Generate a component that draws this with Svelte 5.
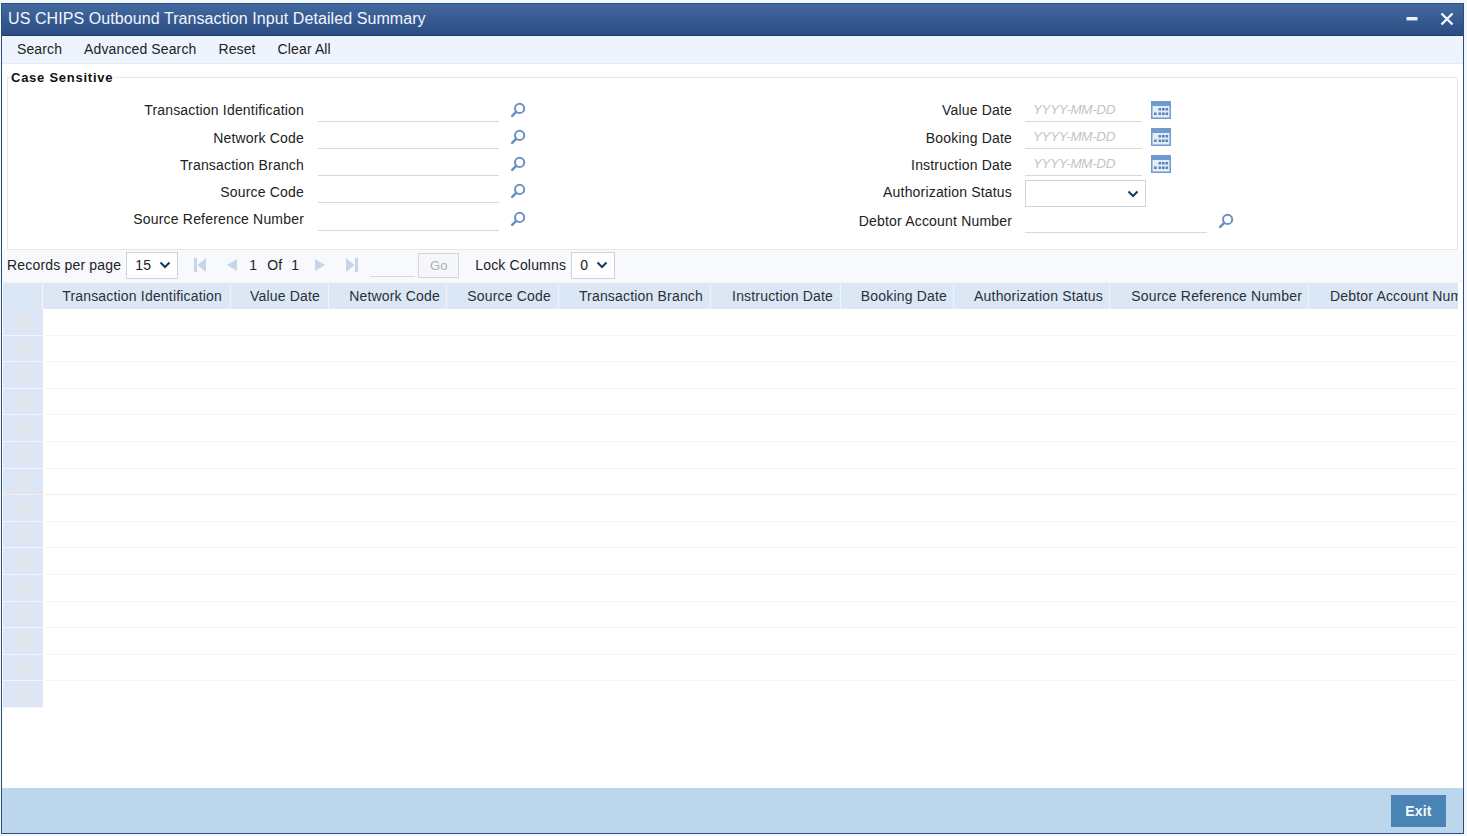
<script>
  const toolbar = ['Search', 'Advanced Search', 'Reset', 'Clear All'];
  const leftFields = ['Transaction Identification', 'Network Code', 'Transaction Branch', 'Source Code', 'Source Reference Number'];
  const dateFields = ['Value Date', 'Booking Date', 'Instruction Date'];
  const columns = [
    ['Transaction Identification', 187, 8], ['Value Date', 98, 8], ['Network Code', 118, 6], ['Source Code', 112, 7],
    ['Transaction Branch', 152, 7], ['Instruction Date', 130, 7], ['Booking Date', 113, 6], ['Authorization Status', 156, 6],
    ['Source Reference Number', 199, 6]
  ];
  const rows = Array.from({ length: 15 }, (_, i) => i);
</script>

{#snippet lens()}
  <svg class="lens" viewBox="0 0 16 16" width="16" height="16" aria-hidden="true">
    <circle cx="9.6" cy="6.4" r="4.6" fill="none" stroke="#6892c6" stroke-width="2" />
    <path d="M6.2 9.8 L2.2 13.8" stroke="#6892c6" stroke-width="2.6" stroke-linecap="round" />
  </svg>
{/snippet}

{#snippet calendar()}
  <svg class="cal" viewBox="0 0 20 18" width="20" height="18" aria-hidden="true">
    <rect width="20" height="18" fill="#6f9bcf" />
    <rect x="1.500" y="5" width="17" height="11.500" fill="#e3ecf7" />
    <path d="M7.500 7h2.600v2.600H7.500zM11 7h2.600v2.600H11zM14.500 7h2.600v2.600h-2.600zM3 11.500h2.600v2.600H3zM7.500 11.500h2.600v2.600H7.500zM11 11.500h2.600v2.600H11zM14.500 11.500h2.600v2.600h-2.600z" fill="#5584bc" />
  </svg>
{/snippet}

{#snippet chevron()}
  <svg class="chev" viewBox="0 0 12 8" width="12" height="8" aria-hidden="true">
    <path d="M1.500 1.500 L6 6 L10.500 1.500" fill="none" stroke="#123a63" stroke-width="2" />
  </svg>
{/snippet}

<div class="page">
  <div class="window">
    <header class="title">
      <span>US CHIPS Outbound Transaction Input Detailed Summary</span>
      <div class="winctl">
        <svg viewBox="0 0 12 12" width="12" height="12" aria-hidden="true"><rect x="0.500" y="4" width="11" height="3.400" fill="#eef3fa" /></svg>
        <svg viewBox="0 0 14 14" width="14" height="14" aria-hidden="true"><path d="M1.500 1.500 L12.500 12.500 M12.500 1.500 L1.500 12.500" stroke="#f4f7fc" stroke-width="2.400" /></svg>
      </div>
    </header>

    <nav class="toolbar">
      {#each toolbar as item}<span>{item}</span>{/each}
    </nav>

    <fieldset class="search">
      <legend>Case Sensitive</legend>
      <div class="form">
        <div class="col left">
          {#each leftFields as f}
            <div class="row">
              <span class="lbl">{f}</span>
              <span class="inp"></span>
              {@render lens()}
            </div>
          {/each}
        </div>
        <div class="col right">
          {#each dateFields as f}
            <div class="row dated">
              <span class="lbl">{f}</span>
              <span class="inp date">YYYY-MM-DD</span>
              {@render calendar()}
            </div>
          {/each}
          <div class="row status">
            <span class="lbl">Authorization Status</span>
            <span class="sel wide">{@render chevron()}</span>
          </div>
          <div class="row debtor">
            <span class="lbl">Debtor Account Number</span>
            <span class="inp long"></span>
            {@render lens()}
          </div>
        </div>
      </div>
    </fieldset>

    <div class="pager">
      <span class="t">Records per page</span>
      <span class="sel small rpp">15{@render chevron()}</span>
      <svg class="pg first" viewBox="0 0 12 14" width="12" height="14" aria-hidden="true"><path d="M0 0h3v14H0zM12 0v14L3.500 7z" fill="#c6d6ea" /></svg>
      <svg class="pg prev" viewBox="0 0 10 12" width="10" height="12" aria-hidden="true"><path d="M10 0v12L0 6z" fill="#c6d6ea" /></svg>
      <span class="t n1">1</span>
      <span class="t of">Of</span>
      <span class="t n2">1</span>
      <svg class="pg next" viewBox="0 0 10 12" width="10" height="12" aria-hidden="true"><path d="M0 0v12l10-6z" fill="#c6d6ea" /></svg>
      <svg class="pg last" viewBox="0 0 12 14" width="12" height="14" aria-hidden="true"><path d="M12 0H9v14h3zM0 0v14l8.500-7z" fill="#c6d6ea" /></svg>
      <span class="pageinp"></span>
      <span class="go">Go</span>
      <span class="t lock">Lock Columns</span>
      <span class="sel small zero">0{@render chevron()}</span>
    </div>

    <div class="grid">
      <div class="clip">
        <div class="head">
          <div class="corner"></div>
          {#each columns as [name, w, pad]}
            <div class="th" style:width="{w}px" style:padding-right="{pad}px">{name}</div>
          {/each}
          <div class="th lastcol">Debtor Account Number</div>
        </div>
        {#each rows as r}
          <div class="tr" class:strong={r === 6}>
            <div class="num"><i></i></div>
            <div class="td"></div>
          </div>
        {/each}
      </div>
    </div>

    <footer class="foot">
      <span class="exit">Exit</span>
    </footer>
  </div>
</div>

<style>
  :global(body) { margin: 0; background: #fff; }
  .page {
    height: 836px;
    box-sizing: border-box;
    padding: 3px 3px 2px 1px;
    background: #f4f8fd;
    font: 14px/16px "Liberation Sans", Arial, sans-serif;
    letter-spacing: 0.18px;
    color: #222;
    overflow: hidden;
  }
  .window {
    height: 100%;
    box-sizing: border-box;
    border: 1px solid #2b4f7c;
    background: #fff;
    display: flex;
    flex-direction: column;
    overflow: hidden;
  }
  .title {
    height: 32px;
    flex: none;
    box-sizing: border-box;
    display: flex;
    align-items: center;
    justify-content: space-between;
    padding: 0 9px 2px 6px;
    background: linear-gradient(#44699f, #2a4d83);
    color: #f2f6fb;
    font-size: 16px;
    letter-spacing: 0.08px;
    border-bottom: 1px solid #23406d;
  }
  .winctl { display: flex; align-items: center; gap: 22px; padding-top: 1px; }
  .toolbar {
    height: 28px;
    flex: none;
    box-sizing: border-box;
    padding: 0 0 2px 15px;
    display: flex;
    align-items: center;
    gap: 22px;
    letter-spacing: 0.12px;
    background: #eef4fd;
    border-bottom: 1px solid #e6ebf1;
  }
  .search {
    flex: none;
    margin: 6px 5px 0 5px;
    padding: 0;
    height: 180px;
    box-sizing: border-box;
    border: 1px solid #e3e8e8;
    min-width: 0;
  }
  legend {
    margin-left: 3px;
    padding: 0 1px 0 0;
    font-weight: bold;
    font-size: 13px;
    line-height: 15px;
    letter-spacing: 0.75px;
    color: #111;
  }
  .form {
    display: grid;
    grid-template-columns: 716px 1fr;
    padding-top: 10px;
  }
  .col { display: flex; flex-direction: column; }
  .row { height: 27.2px; display: flex; align-items: center; }
  .lbl { text-align: right; white-space: nowrap; }
  .left .lbl { width: 296px; margin-right: 14px; padding-top: 3px; }
  .left .row:nth-child(2) .lbl, .left .row:nth-child(3) .lbl { padding-top: 4px; }
  .left .row:last-child { height: 28.200px; }
  .right .lbl { width: 288px; margin-right: 13px; }
  .dated .lbl { padding-top: 3px; }
  .dated:nth-child(2) .lbl, .dated:nth-child(3) .lbl { padding-top: 4px; }
  .inp {
    display: block;
    box-sizing: border-box;
    height: 25px;
    margin-top: 1px;
    border-bottom: 1px solid #d5d9de;
  }
  .left .inp { width: 181px; margin-right: 11px; }
  .date {
    width: 117px;
    margin-right: 9px;
    padding: 5px 0 0 8px;
    color: #c4c4c4;
    font-size: 13.500px;
    letter-spacing: -0.4px;
    font-style: italic;
  }
  .long { width: 182px; margin-right: 11px; }
  .lens, .cal { flex: none; }
  .left .lens { margin-top: 2px; }
  .cal { margin-top: 2px; }
  .status { height: 26px; margin-top: 4px; }
  .status .lbl { margin-top: -3px; }
  .debtor { height: 28px; }
  .debtor .inp { height: 24px; }
  .sel {
    position: relative;
    display: block;
    box-sizing: border-box;
    border: 1px solid #ccd3da;
    background: #fff;
  }
  .chev { position: absolute; top: 50%; right: 6px; margin-top: -4px; }
  .wide { width: 121px; height: 27px; }
  .pager {
    height: 33px;
    flex: none;
    box-sizing: border-box;
    display: flex;
    align-items: center;
    padding: 0 0 2px 5px;
    background: #f7f9fd;
    border-bottom: 1px solid #fbf3ea;
  }
  .small { height: 27px; line-height: 25px; padding-left: 8px; }
  .rpp { width: 52px; margin-left: 5px; }
  .first { margin-left: 16px; }
  .prev { margin-left: 21px; }
  .n1 { margin-left: 12px; }
  .of { margin-left: 10px; }
  .n2 { margin-left: 9px; }
  .next { margin-left: 16px; }
  .last { margin-left: 21px; }
  .pageinp { width: 45px; height: 24px; margin-left: 12px; box-sizing: border-box; border-bottom: 1px solid #d5d9de; }
  .go {
    width: 41px;
    height: 25px;
    margin-left: 3px;
    box-sizing: border-box;
    border: 1px solid #d2d6da;
    background: #f5f7fa;
    color: #aab0b6;
    font-size: 13px;
    letter-spacing: 0;
    text-align: center;
    line-height: 23px;
  }
  .lock { margin-left: 16px; }
  .zero { width: 44px; margin-left: 5px; }
  .grid { flex: 1; min-height: 0; padding: 0 5px 0 1px; }
  .clip { overflow: hidden; height: 100%; }
  .head { display: flex; height: 26px; background: #dce7f6; }
  .corner { width: 39px; flex: none; margin-right: 1px; border-right: 1px solid #f3f6fb; box-sizing: content-box; }
  .th {
    flex: none;
    box-sizing: border-box;
    text-align: right;
    line-height: 27px;
    white-space: nowrap;
    border-right: 1px solid #eef3fa;
    color: #2a3038;
  }
  .lastcol { padding: 0 0 0 21px; border-right: 0; text-align: left; }
  .tr { display: flex; height: 26.600px; }
  .num {
    width: 40px;
    flex: none;
    background: #dce6f6;
    display: flex;
    align-items: center;
    justify-content: center;
    border-bottom: 1px solid #f4f4f2;
    box-sizing: border-box;
    margin-right: 1px;
  }
  .num i { display: block; width: 17px; height: 17px; background: #e2e6ef; }
  .td { flex: 1; box-sizing: border-box; border-bottom: 1px solid #fbf4ea; }
  .tr:last-child .td { border-bottom: 0; }
  .strong .td, .strong .num { border-bottom-color: #fdeadb; }
  .foot {
    height: 45px;
    flex: none;
    box-sizing: border-box;
    display: flex;
    align-items: center;
    justify-content: flex-end;
    padding: 0 17px 0 0;
    background: #bcd7ec;
  }
  .exit {
    width: 55px;
    height: 32px;
    background: #4a84b4;
    color: #f4f8fb;
    font-weight: bold;
    text-align: center;
    line-height: 32px;
  }
</style>
